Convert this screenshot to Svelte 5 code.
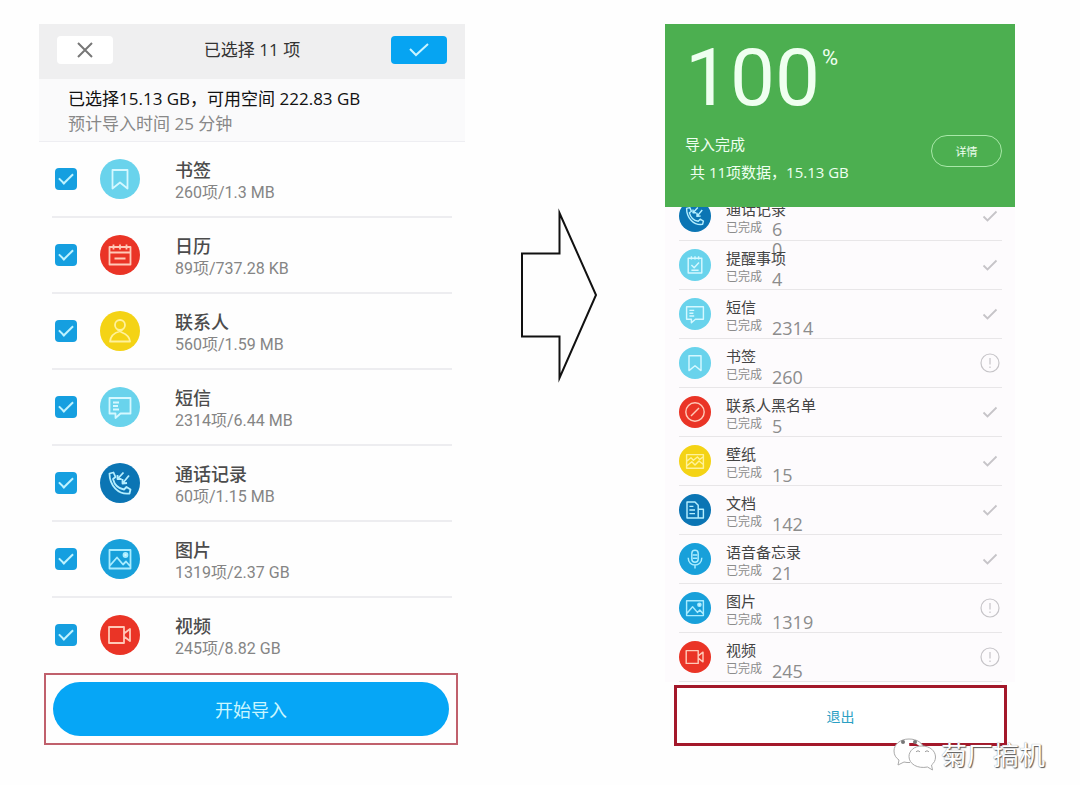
<script>
	/** Data groups offered for import. */
	const groups = [
		{ icon: "bookmark", name: "书签", detail: "260项/1.3 MB" },
		{ icon: "calendar", name: "日历", detail: "89项/737.28 KB" },
		{ icon: "contact", name: "联系人", detail: "560项/1.59 MB" },
		{ icon: "message", name: "短信", detail: "2314项/6.44 MB" },
		{ icon: "call", name: "通话记录", detail: "60项/1.15 MB" },
		{ icon: "image", name: "图片", detail: "1319项/2.37 GB" },
		{ icon: "video", name: "视频", detail: "245项/8.82 GB" }
	];

	/** Results once the import has finished. */
	const results = [
		{ icon: "call", name: "通话记录", count: "60", ok: true, narrow: true },
		{ icon: "reminder", name: "提醒事项", count: "4", ok: true },
		{ icon: "message", name: "短信", count: "2314", ok: true },
		{ icon: "bookmark", name: "书签", count: "260", ok: false },
		{ icon: "blocked", name: "联系人黑名单", count: "5", ok: true },
		{ icon: "wallpaper", name: "壁纸", count: "15", ok: true },
		{ icon: "document", name: "文档", count: "142", ok: true },
		{ icon: "voice", name: "语音备忘录", count: "21", ok: true },
		{ icon: "image", name: "图片", count: "1319", ok: false },
		{ icon: "video", name: "视频", count: "245", ok: false }
	];

	let checked = $state(groups.map(() => true));
</script>

{#snippet glyph(name)}
	<svg class="glyph {name}" viewBox="0 0 40 40" aria-hidden="true">
		<circle class="disc" cx="20" cy="20" r="20" />
		{#if name === "bookmark"}
			<path d="M12.5 11h15v18.500L20 23.500l-7.500 6z" />
		{:else if name === "calendar"}
			<path d="M9.500 12h21v17.500h-21zM9.500 17.500h21M13.500 9.500v5M20 9.500v5M26.500 9.500v5M14.500 23.500h11" />
		{:else if name === "contact"}
			<circle cx="20" cy="14" r="5" />
			<path d="M17.500 18.500l4.500 3M22.500 18.500l-3 2C13.500 22 10.500 26 10 30.500h20c-.3-4-3-7-8-9" />
		{:else if name === "message"}
			<path d="M9.500 11h21v15.500H20.500L15.500 31v-4.500h-6zM13 15.500h6M13 19h5M13 22.500h6" />
		{:else if name === "call"}
			<path d="M9.500 10.500l4-1 2 4.500-2.500 2c1.500 6 5 9.500 11 10.500l2.500-2.500 4 2.500-1 4c-11 1.500-20-8-20-20z" />
			<path d="M17.500 16l6-6.500M17.500 12v4h4M29 12.500l-6.500 8M22.500 16v4.500l4.500-.5" />
		{:else if name === "image"}
			<path d="M9.500 11h21v18.500h-21zM10 26.500l7-8 6 7 3-3 4 4.500" />
			<circle class="solid" cx="25.500" cy="16" r="2" />
		{:else if name === "video"}
			<path d="M9 12h15v16H9zM24 18.500l6-4.500v12l-6-4.500z" />
		{:else if name === "reminder"}
			<path d="M11.500 11.500h17v18.500h-17zM15.500 9v4M20 9v4M24.500 9v4M15.500 20l3.500 3.500 6-6.500M15.500 26.500h9" />
		{:else if name === "blocked"}
			<circle cx="20" cy="20" r="11.500" />
			<path d="M15 25l10-10" />
		{:else if name === "wallpaper"}
			<path d="M9.500 12h21v17h-21zM10 20l5-4 3 3 5-4 3 3 4-3M10 26l6-5 4 4 5-5 5 4" />
		{:else if name === "document"}
			<path d="M24 30H10V10h10l4 4zM24 19h6.500v11H24M13 15.500h5M13 20h7M13 24.500h7" />
		{:else if name === "voice"}
			<rect x="16" y="9" width="8" height="15" rx="4" />
			<path d="M11.500 18.500c0 12 17 12 17 0M20 27.500V32M17 15h6M17 19h6" />
		{/if}
	</svg>
{/snippet}

<main class="page">
	<section class="select">
		<header class="bar">
			<button class="cancel" aria-label="取消">
				<svg viewBox="0 0 16 16" width="16" height="16"><path d="M1 1l14 14M15 1L1 15" /></svg>
			</button>
			<h1>已选择 11 项</h1>
			<button class="confirm" aria-label="确定">
				<svg viewBox="0 0 20 14" width="20" height="14"><path d="M1 6l6 6L19 1" /></svg>
			</button>
		</header>
		<div class="summary">
			<p>已选择15.13 GB，可用空间 222.83 GB</p>
			<p class="time">预计导入时间 25 分钟</p>
		</div>
		<ul class="groups">
			{#each groups as group, i}
				<li>
					<label>
						<input type="checkbox" bind:checked={checked[i]} />
						{@render glyph(group.icon)}
						<span class="text">
							<span class="name">{group.name}</span>
							<span class="detail">{group.detail}</span>
						</span>
					</label>
				</li>
			{/each}
		</ul>
		<div class="start-frame">
			<button class="start">开始导入</button>
		</div>
	</section>

	<svg class="arrow" viewBox="0 0 78 176" width="78" height="176" aria-hidden="true">
		<path d="M2 46.500h37.500V6L76 88 39.500 171v-41.500H2z" />
	</svg>

	<section class="done">
		<header class="hero">
			<div class="percent">100<span>%</span></div>
			<div class="status">
				<div>
					<p>导入完成</p>
					<p class="total">共 11项数据，15.13 GB</p>
				</div>
				<button class="more">详情</button>
			</div>
		</header>
		<ul class="results">
			{#each results as result}
				<li>
					{@render glyph(result.icon)}
					<div class="text">
						<span class="name">{result.name}</span>
						<span class="line">
							<span class="state">已完成</span>
							<span class="count" class:narrow={result.narrow}>{result.count}</span>
						</span>
					</div>
					<svg class="mark" viewBox="0 0 20 20" width="20" height="20" aria-hidden="true">
						{#if result.ok}
							<path class="tick" d="M3.500 10.500l4 4 9-9" />
						{:else}
							<circle cx="10" cy="10" r="9" />
							<path d="M10 5v6.500M10 13.500v1.500" />
						{/if}
					</svg>
				</li>
			{/each}
		</ul>
		<button class="exit">退出</button>
		<div class="watermark">
			<svg viewBox="0 0 44 34" width="44" height="34" aria-hidden="true">
				<path class="bubble" d="M16 1C7 1 1 6.500 1 13c0 4 2 7 5 9l-1 5 6-3c2 .5 4 .7 6 .5" />
				<path class="bubble" d="M16 1c8 0 14 4 15 10" />
				<circle class="eye" cx="10" cy="4" r="2" />
				<circle class="eye" cx="22" cy="4" r="2" />
				<path class="bubble" d="M29 8c8 0 13.500 5 13.500 11 0 3.500-1.500 6-4 8l1 5-5-3c-10 2-18.500-3-18.500-10.500C16 13 21 8 29 8z" />
				<path class="lid" d="M23 14c1-1.500 3-1.500 4 0M32 14c1-1.500 3-1.500 4 0" />
			</svg>
			<span>菊厂搞机</span>
		</div>
	</section>
</main>

<style>
	:global(body) {
		margin: 0;
		background: #fefefe;
	}

	.page {
		display: grid;
		grid-template-columns: 426fr 200fr 350fr;
		align-items: start;
		padding: 24px 65px 39px 39px;
		font-family: "Open Sans", "Noto Sans CJK SC", sans-serif;
		color: #333;
	}

	h1,
	p,
	ul {
		margin: 0;
		padding: 0;
		font-weight: 400;
		list-style: none;
	}

	button {
		padding: 0;
		border: 0;
		font-family: inherit;
		cursor: pointer;
	}

	svg {
		fill: none;
		flex: none;
	}

	/* Selection screen */
	.bar {
		display: flex;
		align-items: center;
		justify-content: space-between;
		height: 55px;
		padding: 0 18px 4px;
		box-sizing: border-box;
		background: #efeff0;
		h1 {
			font-size: 17px;
			line-height: 24px;
		}
		button {
			display: flex;
			align-items: center;
			justify-content: center;
			width: 56px;
			height: 28px;
			border-radius: 4px;
		}
	}

	.cancel {
		background: #fff;
		stroke: #777;
		stroke-width: 2;
	}

	.confirm {
		background: #06a4f2;
		stroke: #c9f4ff;
		stroke-width: 2;
	}

	.summary {
		padding: 7px 29px 5px;
		border-bottom: 1px solid #eeeef2;
		background: #fafafb;
		font-size: 17px;
		line-height: 25px;
		color: #111;
		.time {
			color: #888;
		}
	}

	.groups {
		margin: 0 13px;
		li {
			height: 76px;
			border-bottom: 2px solid #ededf0;
			box-sizing: border-box;
			&:last-child {
				height: 75px;
				border-color: transparent;
			}
		}
		label {
			display: flex;
			align-items: center;
			height: 100%;
			padding-left: 3px;
		}
		.glyph {
			width: 40px;
			height: 40px;
			margin: 0 35px 0 23px;
		}
		.text {
			display: grid;
			padding-top: 4px;
			font-family: Roboto, "Noto Sans CJK SC", sans-serif;
		}
		.name {
			font-size: 18px;
			line-height: 24px;
			font-weight: 500;
			color: #4c4c4c;
		}
		.detail {
			font-size: 16px;
			line-height: 20px;
			color: #858585;
		}
	}

	input {
		appearance: none;
		display: grid;
		place-items: center;
		width: 22px;
		height: 22px;
		margin: 0;
		border-radius: 4px;
		background: #d5d8da;
		&:checked {
			background: #159fe0;
		}
		&:checked::before {
			content: "";
			width: 12px;
			height: 6px;
			margin-bottom: 4px;
			border: solid #bff3ff;
			border-width: 0 0 2px 2px;
			transform: rotate(-45deg);
		}
	}

	.glyph {
		stroke: #d5f8ff;
		stroke-width: 1.8;
		stroke-linejoin: round;
		.disc {
			fill: #69d3ec;
			stroke: none;
		}
		.solid {
			fill: #d5f8ff;
		}
		&.calendar,
		&.video,
		&.blocked {
			stroke: #ffc9b8;
			.disc {
				fill: #ea3426;
			}
		}
		&.contact,
		&.wallpaper {
			stroke: #fff29a;
			.disc {
				fill: #f4d315;
			}
		}
		&.call,
		&.document {
			stroke: #b5efff;
			.disc {
				fill: #0b75b4;
			}
		}
		&.image,
		&.voice {
			stroke: #a9ecff;
			.disc {
				fill: #18a0da;
			}
		}
	}

	.start-frame {
		margin: 0 7px 0 5px;
		padding: 7px;
		border: 2px solid #c0606c;
	}

	.start {
		display: block;
		width: 100%;
		height: 54px;
		border-radius: 27px;
		background: #06a6f6;
		font-size: 18px;
		color: #c9f6ff;
	}

	.arrow {
		margin: 183px 0 0 55px;
		stroke: #111;
		stroke-width: 2;
		stroke-miterlimit: 10;
	}

	/* Result screen */
	.done {
		position: relative;
	}

	.hero {
		position: relative;
		z-index: 1;
		height: 183px;
		padding: 8px 13px 0 20px;
		box-sizing: border-box;
		background: #4caf50;
		color: #effff0;
	}

	.percent {
		display: flex;
		align-items: flex-start;
		font-family: Roboto, sans-serif;
		font-size: 80px;
		line-height: 92px;
		span {
			margin: 13px 0 0 2px;
			font-size: 22px;
			line-height: 26px;
		}
	}

	.status {
		display: flex;
		align-items: center;
		justify-content: space-between;
		margin-top: 6px;
		font-size: 15px;
		line-height: 28px;
		.total {
			padding-left: 5px;
		}
	}

	.more {
		width: 71px;
		height: 32px;
		margin-bottom: 14px;
		border: 1px solid #a8e8a8;
		border-radius: 16px;
		background: none;
		font-size: 11px;
		color: #effff0;
	}

	.results {
		margin-top: -15px;
		padding: 0 13px 0 14px;
		background: #fdfbfd;
		li {
			display: flex;
			align-items: center;
			height: 49px;
			border-bottom: 1px solid #e8e6e8;
			box-sizing: border-box;
		}
		.glyph {
			width: 32px;
			height: 32px;
			margin-right: 15px;
		}
		.text {
			flex: 1;
			padding-top: 3px;
		}
		.name {
			display: block;
			font-size: 15px;
			line-height: 20px;
			color: #444;
		}
		.line {
			display: flex;
			height: 18px;
			font-size: 12px;
			line-height: 18px;
			color: #8c8c8c;
		}
		.count {
			margin-left: 10px;
			font-size: 18px;
			line-height: 22px;
			&.narrow {
				width: 12px;
				line-height: 20px;
				word-break: break-all;
			}
		}
	}

	.mark {
		margin-right: 2px;
		stroke: #c6c4c8;
		stroke-width: 1.2;
		.tick {
			stroke-width: 1.8;
		}
	}

	.exit {
		display: block;
		width: calc(100% - 17px);
		height: 61px;
		margin: 3px 8px 0 9px;
		border: 3px solid #a3182a;
		background: #fff;
		font-size: 14px;
		color: #2b9fc4;
	}

	.watermark {
		position: absolute;
		right: -30px;
		bottom: -27px;
		display: flex;
		align-items: center;
		gap: 4px;
		font-size: 26px;
		line-height: 36px;
		color: #fff;
		text-shadow: 1px 1px 1px #555, 0 0 1px #888;
		.bubble {
			fill: #fff;
			stroke: #aaa;
		}
		.eye {
			fill: #777;
		}
		.lid {
			stroke: #999;
		}
	}
</style>
